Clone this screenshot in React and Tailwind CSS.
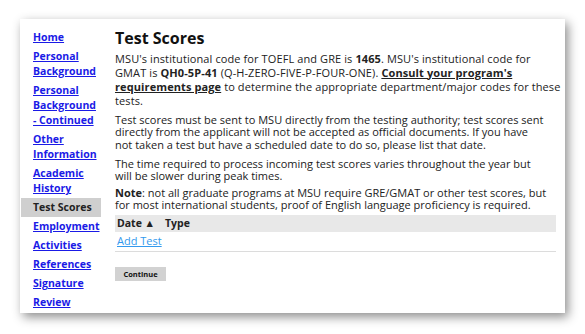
const navItems = [
  "Home",
  "Personal Background",
  "Personal Background - Continued",
  "Other Information",
  "Academic History",
  "Test Scores",
  "Employment",
  "Activities",
  "References",
  "Signature",
  "Review",
];

export default function App() {
  return (
    <div className="w-[585px] h-[334px] bg-white pl-[20px] pt-[19px] font-['Open_Sans',sans-serif] text-[#222]">
      <div className="w-[545px] h-[294px] bg-white shadow-[3px_4px_10px_rgba(0,0,0,0.45)] flex pl-px">
        {/* sidebar */}
        <ul className="w-[80px] pt-[9px] shrink-0">
          {navItems.map((item) =>
            item === "Test Scores" ? (
              <li
                key={item}
                className="pl-[12px] py-[2px] bg-[#cfcfcf] text-[10.5px] leading-[15px] font-bold text-[#222]"
              >
                {item}
              </li>
            ) : (
              <li key={item} className="pl-[12px] py-[2px] text-[10.5px] leading-[15px]">
                <a href="#" className="font-bold text-[#1a1ae6] underline">
                  {item}
                </a>
              </li>
            )
          )}
        </ul>

        {/* main */}
        <div className="ml-[14px] w-[441px] pt-[9px] text-[11px] whitespace-nowrap">
          <h1 className="text-[16px] leading-[20px] font-bold text-[#111]">Test Scores</h1>
          <p className="mt-[3.5px] leading-[14px] tracking-[0.1px]">
            MSU's institutional code for TOEFL and GRE is <b>1465</b>. MSU's institutional code for
            <br />
            GMAT is <b>QH0-5P-41</b> (Q-H-ZERO-FIVE-P-FOUR-ONE).{" "}
            <a href="#" className="font-bold underline text-[#222]">
              Consult your program's
              <br />
              requirements page
            </a>{" "}
            to determine the appropriate department/major codes for these
            <br />
            tests.
          </p>
          <p className="mt-[6px] leading-[12.5px]">
            Test scores must be sent to MSU directly from the testing authority; test scores sent
            <br />
            directly from the applicant will not be accepted as official documents. If you have
            <br />
            not taken a test but have a scheduled date to do so, please list that date.
          </p>
          <p className="mt-[6.5px] leading-[12.5px]">
            The time required to process incoming test scores varies throughout the year but
            <br />
            will be slower during peak times.
          </p>
          <p className="mt-[4px] leading-[12.5px]">
            <b>Note</b>: not all graduate programs at MSU require GRE/GMAT or other test scores, but
            <br />
            for most international students, proof of English language proficiency is required.
          </p>

          <div className="mt-[3.5px]">
            <div className="h-[17px] bg-[#e8e8e8] flex items-center text-[10.5px] font-bold">
              <span className="w-[50px] pl-[2px]">Date ▲</span>
              <span>Type</span>
            </div>
            <div className="h-[20px] border-b border-[#dcdcdc] flex items-center pl-[2px]">
              <a href="#" className="text-[11px] text-[#3399ee] underline">
                Add Test
              </a>
            </div>
          </div>

          <button className="mt-[15px] w-[51px] h-[14px] bg-[#d2d2d2] text-[7.5px] font-bold leading-[14px] text-[#111]">
            Continue
          </button>
        </div>
      </div>
    </div>
  );
}
